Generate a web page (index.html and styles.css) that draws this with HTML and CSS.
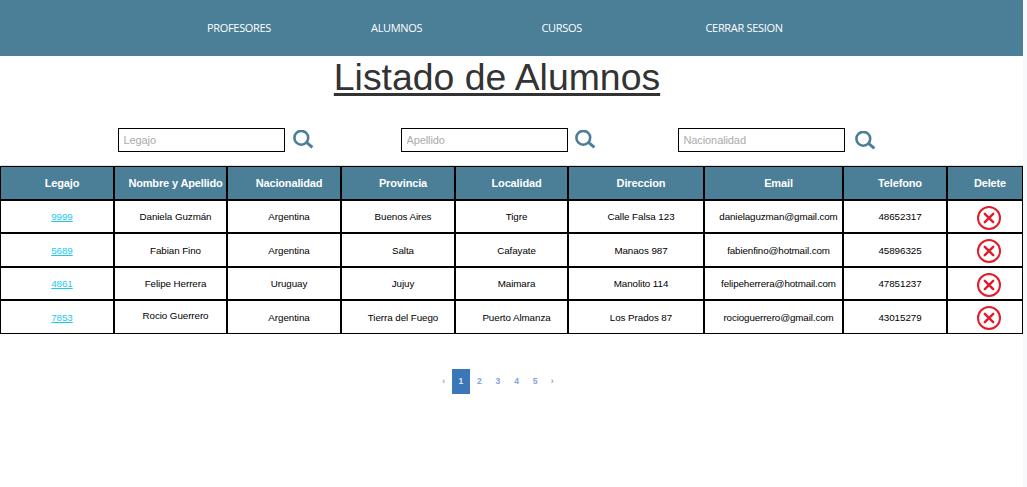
FILE: index.html
```html
<!DOCTYPE html>
<html lang="es">
<head>
<meta charset="utf-8">
<title>Listado de Alumnos</title>
<link rel="stylesheet" href="styles.css">
</head>
<body>
<svg width="0" height="0" class="defs" aria-hidden="true">
  <symbol id="search" viewBox="0 0 21 19"><circle cx="8.3" cy="7.8" r="6.9" fill="none" stroke="#4b7e97" stroke-width="2.6"/><path d="M13.2 12.2L19.4 17.4" stroke="#4b7e97" stroke-width="3" fill="none"/></symbol>
  <symbol id="remove" viewBox="0 0 24 24"><circle cx="12" cy="12" r="11" fill="none" stroke="#e11c2b" stroke-width="2"/><path d="M7.8 7.8L16.2 16.2M16.2 7.8L7.8 16.2" stroke="#e11c2b" stroke-width="2.4" stroke-linecap="round" fill="none"/></symbol>
</svg>
<div class="page">
  <nav class="nav">
    <a class="nav-1">PROFESORES</a><a class="nav-2">ALUMNOS</a><a class="nav-3">CURSOS</a><a class="nav-4">CERRAR SESION</a>
  </nav>
  <h1 class="title">Listado de Alumnos</h1>
  <form class="filters">
    <input class="field" placeholder="Legajo"><svg class="search"><use href="#search"/></svg>
    <input class="field field-2" placeholder="Apellido"><svg class="search search-2"><use href="#search"/></svg>
    <input class="field field-3" placeholder="Nacionalidad"><svg class="search search-3"><use href="#search"/></svg>
  </form>
  <div class="table">
    <div class="th">Legajo</div><div class="th">Nombre y Apellido</div><div class="th">Nacionalidad</div><div class="th">Provincia</div><div class="th">Localidad</div><div class="th">Direccion</div><div class="th">Email</div><div class="th">Telefono</div><div class="th">Delete</div>
    <div class="td"><a class="link">9999</a></div><div class="td">Daniela Guzmán</div><div class="td">Argentina</div><div class="td">Buenos Aires</div><div class="td">Tigre</div><div class="td">Calle Falsa 123</div><div class="td email">danielaguzman@gmail.com</div><div class="td">48652317</div><div class="td action"><svg class="remove"><use href="#remove"/></svg></div>
    <div class="td"><a class="link">5689</a></div><div class="td">Fabian Fino</div><div class="td">Argentina</div><div class="td">Salta</div><div class="td">Cafayate</div><div class="td">Manaos 987</div><div class="td email">fabienfino@hotmail.com</div><div class="td">45896325</div><div class="td action"><svg class="remove"><use href="#remove"/></svg></div>
    <div class="td"><a class="link">4861</a></div><div class="td">Felipe Herrera</div><div class="td">Uruguay</div><div class="td">Jujuy</div><div class="td">Maimara</div><div class="td">Manolito 114</div><div class="td email">felipeherrera@hotmail.com</div><div class="td">47851237</div><div class="td action"><svg class="remove"><use href="#remove"/></svg></div>
    <div class="td"><a class="link">7853</a></div><div class="td raised">Rocio Guerrero</div><div class="td">Argentina</div><div class="td">Tierra del Fuego</div><div class="td">Puerto Almanza</div><div class="td">Los Prados 87</div><div class="td email">rocioguerrero@gmail.com</div><div class="td">43015279</div><div class="td action"><svg class="remove"><use href="#remove"/></svg></div>
  </div>
  <div class="pager">
    <span class="pg arrow off">‹</span><span class="pg current">1</span><span class="pg">2</span><span class="pg">3</span><span class="pg">4</span><span class="pg">5</span><span class="pg arrow">›</span>
  </div>
</div>
</body>
</html>
```
FILE: styles.css
```css
* { box-sizing: border-box; }
body { margin: 0; background: #f8f9fa; font-family: "Liberation Sans", Arial, sans-serif; }
.defs { display: none; }
.page { width: 1023px; height: 487px; background: #fff; overflow: hidden; }
.nav { display: flex; align-items: center; height: 56px; padding-left: 207px; background: #4b7e97; color: #fff; font: 11px/16px "Open Sans", sans-serif; letter-spacing: -0.32px; white-space: nowrap; }
.nav-1 { width: 164px; }
.nav-2 { width: 170.5px; }
.nav-3 { width: 164px; }
.title { margin: 0; padding-right: 29px; height: 72px; font-size: 37.4px; font-weight: 400; line-height: 43px; text-align: center; color: #333; text-decoration: underline; text-decoration-thickness: 3px; text-underline-offset: 3px; }
.filters { display: flex; height: 38px; padding-left: 118px; border-bottom: 1px solid #dee2e6; }
.field { width: 167px; height: 24px; border: 1px solid #000; border-radius: 0; padding: 0 4.5px; font: 11px "Liberation Sans", Arial, sans-serif; letter-spacing: -0.1px; background: #fff; }
.field::placeholder { color: #aaa; opacity: 1; }
.field-2 { margin-left: 87px; }
.field-3 { margin-left: 82px; }
.search { width: 21px; height: 19px; margin: 2px 0 0 8px; }
.search-2 { margin-left: 7px; }
.search-3 { margin: 3px 0 0 10px; }
.table { display: grid; grid-template-columns: 114px 113px 114px 114px 113px 136px 139px 104px 76px; grid-template-rows: 34px 33px 34px 33px 34px; }
.th, .td { display: flex; align-items: center; justify-content: center; border: 1px solid #000; padding-left: 10px; white-space: nowrap; }
.th { background: #4b7e97; color: #fff; font-size: 11px; font-weight: 700; letter-spacing: -0.15px; }
.td { color: #000; font-size: 9.8px; letter-spacing: -0.07px; }
.email { letter-spacing: -0.12px; }
.raised { padding: 0 0 3px 10px; }
.link { color: #1bc9ee; text-decoration: underline; }
.action { padding: 2px 0 0 8px; }
.remove { width: 24px; height: 24px; flex: none; }
.pager { display: flex; margin: 35px 0 0 436px; }
.pg { width: 18.6px; height: 25px; line-height: 25px; text-align: center; font-size: 8.5px; font-weight: 700; color: #7fa4d2; }
.current { background: #3b76b9; color: #dce8f5; }
.arrow { width: 15.5px; }
.off { color: #aaa; }
```
